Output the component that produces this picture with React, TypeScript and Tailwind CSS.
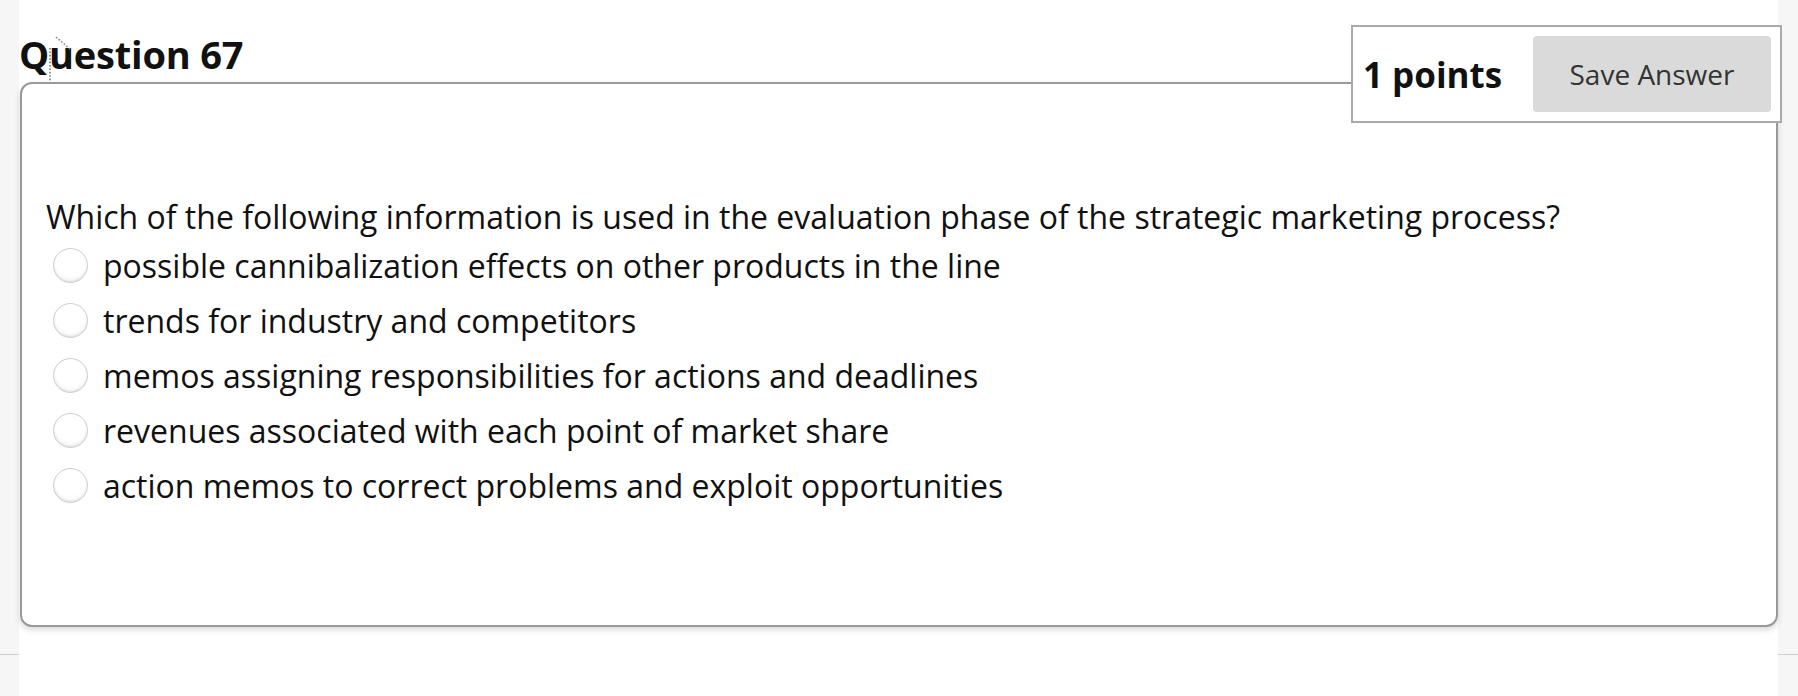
import React from "react";

const options = [
  "possible cannibalization effects on other products in the line",
  "trends for industry and competitors",
  "memos assigning responsibilities for actions and deadlines",
  "revenues associated with each point of market share",
  "action memos to correct problems and exploit opportunities",
];

export default function App() {
  return (
    <div
      className="flex h-[696px] w-[1798px] bg-[#f6f6f6] overflow-hidden"
      style={{ fontFamily: '"Open Sans", "Noto Sans", sans-serif' }}
    >
      <div className="w-[19px] shrink-0">
        <div className="h-[655px] border-b border-[#cfcfcf]" />
      </div>
      <div className="relative w-[1759px] shrink-0 bg-white">
        <h2 className="mt-[35px] h-[38px] text-[38px] leading-[38px] font-bold text-[#111] tracking-[-0.2px] whitespace-nowrap">
          Question 67
        </h2>
        <svg
          className="absolute left-[28px] top-[34px]"
          width="30"
          height="50"
          viewBox="0 0 30 50"
        >
          <line x1="3" y1="14" x2="3" y2="48" stroke="#777" strokeWidth="1.6" strokeDasharray="1.6 1.8" />
          <line x1="9" y1="3" x2="24" y2="16" stroke="#888" strokeWidth="1.6" strokeDasharray="1.6 1.8" />
        </svg>
        <div className="ml-[1px] mt-[9px] h-[545px] rounded-[12px] border-2 border-[#999] bg-white shadow-[0_3px_6px_rgba(0,0,0,0.15)]">
          <div className="pl-[24px] pt-[113px]">
            <p className="text-[32px] leading-[40px] text-[#111] whitespace-nowrap">
              Which of the following information is used in the evaluation phase of the strategic marketing process?
            </p>
            <div className="mt-[1px] flex flex-col">
              {options.map((o) => (
                <label key={o} className="flex h-[55px] items-center">
                  <span className="ml-[7px] mr-[15px] h-[35px] w-[35px] shrink-0 rounded-full border border-[#cfcfcf] bg-[radial-gradient(circle_at_50%_35%,#ffffff_55%,#eeeeee_100%)] shadow-[inset_0_-1px_2px_rgba(0,0,0,0.1)]" />
                  <span className="text-[32px] leading-[40px] text-[#111] whitespace-nowrap">{o}</span>
                </label>
              ))}
            </div>
          </div>
        </div>
        <div className="absolute left-[1332px] top-[25px] flex h-[98px] w-[431px] items-center justify-between border-2 border-[#aaa] bg-white p-[9px]">
          <span className="pl-[1px] text-[35px] font-bold leading-none text-[#111] whitespace-nowrap">1 points</span>
          <button className="flex h-[76px] w-[238px] items-center justify-center rounded-[4px] bg-[#dadada] text-[28px] text-[#333]">
            Save Answer
          </button>
        </div>
      </div>
      <div className="w-[20px] shrink-0">
        <div className="h-[655px] border-b border-[#cfcfcf]" />
      </div>
    </div>
  );
}
